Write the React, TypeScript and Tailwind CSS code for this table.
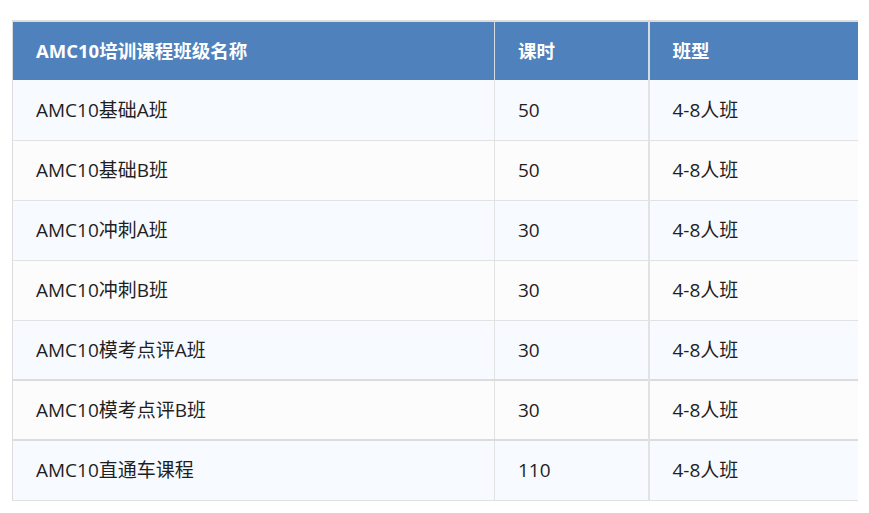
import React from 'react';

const rows = [
  { name: 'AMC10基础A班', hours: '50', size: '4-8人班' },
  { name: 'AMC10基础B班', hours: '50', size: '4-8人班' },
  { name: 'AMC10冲刺A班', hours: '30', size: '4-8人班' },
  { name: 'AMC10冲刺B班', hours: '30', size: '4-8人班' },
  { name: 'AMC10模考点评A班', hours: '30', size: '4-8人班' },
  { name: 'AMC10模考点评B班', hours: '30', size: '4-8人班' },
  { name: 'AMC10直通车课程', hours: '110', size: '4-8人班' },
];

export default function App() {
  return (
    <div className="min-h-screen bg-white pt-[20px] pl-[12px] font-['Open_Sans','Noto_Sans_CJK_SC',sans-serif]">
      <table className="w-[845px] table-fixed border-collapse border-t-2 border-l border-[#dcdcdc] text-[19px] text-[#1f1f1f]">
        <colgroup>
          <col className="w-[482px]" />
          <col className="w-[154px]" />
          <col className="w-[209px]" />
        </colgroup>
        <thead>
          <tr className="h-[59px] bg-[#4f81bd] text-left text-[18.5px] font-bold text-white">
            <th className="px-[23px]">AMC10培训课程班级名称</th>
            <th className="border-l border-[#d6dbe3] px-[23px]">课时</th>
            <th className="border-l-2 border-[#d6dbe3] px-[23px]">班型</th>
          </tr>
        </thead>
        <tbody>
          {rows.map((r, i) => (
            <tr
              key={r.name}
              className={`h-[60px] border-b ${i === 4 || i === 5 ? 'border-b-2 border-[#dcdcdc]' : 'border-[#e2e2e2]'} ${i % 2 === 0 ? 'bg-[#f7faff]' : 'bg-[#fcfcfc]'}`}
            >
              <td className="px-[23px]">{r.name}</td>
              <td className="border-l border-[#e2e2e2] px-[23px]">{r.hours}</td>
              <td className="border-l-2 border-[#e2e2e2] px-[23px]">{r.size}</td>
            </tr>
          ))}
        </tbody>
      </table>
    </div>
  );
}
